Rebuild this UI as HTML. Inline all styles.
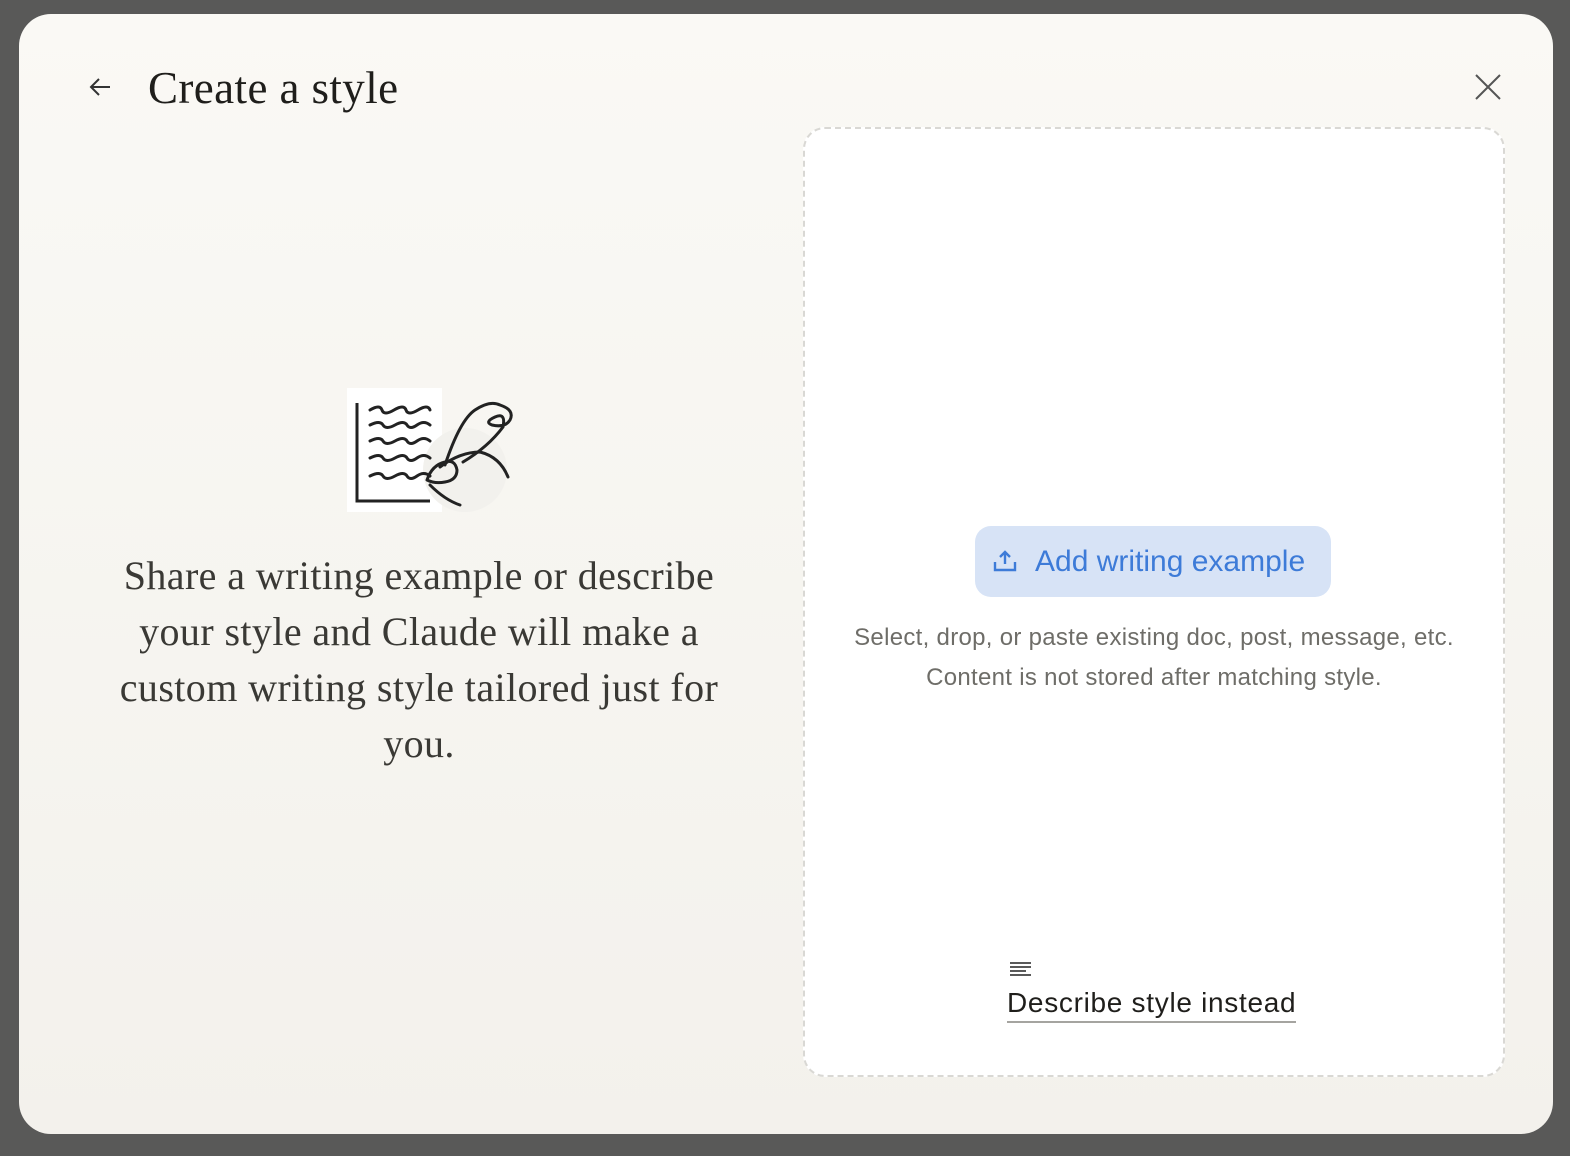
<!DOCTYPE html>
<html><head><meta charset="utf-8"><style>
html,body{margin:0;padding:0;width:1570px;height:1156px;background:#595958;overflow:hidden}
.modal{position:absolute;left:19px;top:14px;width:1534px;height:1120px;border-radius:32px;background:linear-gradient(#faf9f5,#f3f1ec);}
.title{position:absolute;left:148px;top:62px;font-family:"Liberation Serif",serif;font-size:45px;color:#1f1e1b;letter-spacing:0.4px}
.back{position:absolute;left:88px;top:76px}
.close{position:absolute;left:1474px;top:73px}
.panel{position:absolute;left:803px;top:127px;width:698px;height:946px;border:2px dashed #d9d8d4;border-radius:22px;background:#fff}
.left{position:absolute;left:109px;top:548px;width:620px;text-align:center;font-family:"Liberation Serif",serif;font-size:40px;letter-spacing:0.4px;line-height:56px;color:#3a3935}
.btn{position:absolute;left:975px;top:526px;width:356px;height:71px;border-radius:16px;background:#d7e3f6;color:#3d7bd8;font-family:"Liberation Sans",sans-serif;font-size:30px;line-height:71px}
.btn span{position:absolute;left:60px}
.sub{position:absolute;left:803px;width:702px;text-align:center;font-family:"Liberation Sans",sans-serif;font-size:24px;letter-spacing:0.3px;color:#6e6d68;line-height:40px;top:618px}
.desc{position:absolute;left:1007px;top:985px;font-family:"Liberation Sans",sans-serif;font-size:28px;letter-spacing:0.7px;color:#1f1e1b;border-bottom:2px solid #a5a4a0;line-height:36px}
</style></head><body>
<div class="modal"></div>
<svg class="back" width="24" height="22" viewBox="0 0 24 22"><path d="M22 11H3M11 3L3 11l8 8" fill="none" stroke="#333" stroke-width="2"/></svg>
<div class="title">Create a style</div>
<svg class="close" width="28" height="28" viewBox="0 0 28 28"><path d="M2 2l24 24M26 2L2 26" stroke="#555" stroke-width="2"/></svg>
<svg style="position:absolute;left:345px;top:385px" width="180" height="130" viewBox="0 0 180 130">
<rect x="2" y="3" width="95" height="124" fill="#fff"/>
<circle cx="120" cy="85" r="42" fill="#f2f1ed"/>
<path d="M12 18V116H85" fill="none" stroke="#222" stroke-width="3"/>
<g fill="none" stroke="#222" stroke-width="3" stroke-linecap="round">
<path d="M25 25q10-6 12 0t12 0 12 0 12 0 12 0"/>
<path d="M25 40q10-5 13 0t12 0 12 0 10 0 13 0"/>
<path d="M25 56q10-5 13 0t12 0 12 0 10 0 13 0"/>
<path d="M25 73q10-5 13 0t12 0 12 0 10 0 13 0"/>
<path d="M25 91q10-5 13 0t12 0 12 0 10 0 13 0"/>
<path d="M100 80q15-45 30-55 15-10 25-5 15 5 10 15-5 8-18 5-8-3 3-8t8 10q-15 20-40 35"/>
<path d="M82 95q5-15 18-18 10-3 12 8 0 10-12 12-10 2-18-2M95 82q20-15 40-15 20 5 28 25M85 100q15 15 30 20"/>
</g></svg>
<div class="left">Share a writing example or describe your style and Claude will make a custom writing style tailored just for you.</div>
<div class="panel"></div>
<div class="btn"><svg style="position:absolute;left:18px;top:24px" width="24" height="22" viewBox="0 0 24 22"><path d="M12 14V2M7 7l5-5 5 5M2 12v8h20v-8" fill="none" stroke="#3d7bd8" stroke-width="2.4"/></svg><span>Add writing example</span></div>
<div class="sub">Select, drop, or paste existing doc, post, message, etc.<br>Content is not stored after matching style.</div>
<svg style="position:absolute;left:1009px;top:961px" width="24" height="16" viewBox="0 0 24 16"><path d="M1 2h21M1 6h21M1 10h16M1 14h21" stroke="#222" stroke-width="1.6"/></svg>
<div class="desc">Describe style instead</div>
</body></html>
